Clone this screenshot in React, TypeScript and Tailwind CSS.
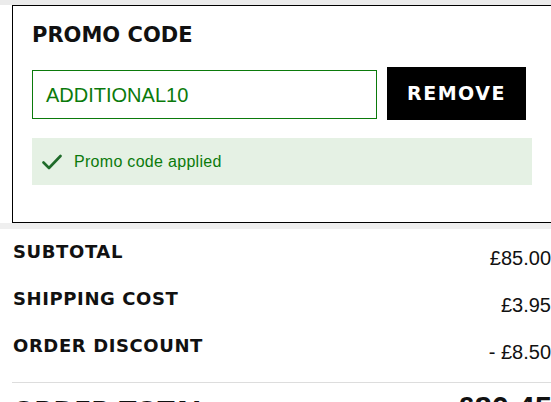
const rows = [
  { label: 'SUBTOTAL', value: '£85.00' },
  { label: 'SHIPPING COST', value: '£3.95' },
  { label: 'ORDER DISCOUNT', value: '- £8.50' },
];

const heading = "font-['DejaVu_Sans',sans-serif] font-bold";

export default function App() {
  return (
    <div className="w-[551px] h-[402px] overflow-hidden bg-white text-[#111]">
      <div className="h-[5px] bg-[#ebebeb]" />
      <div className="w-[540px] ml-[12px]">
        <section className="border border-black px-[19px] pt-[17px] pb-[37px]">
          <h2 className={`${heading} text-[21px] leading-[24px] text-[#111]`}>PROMO CODE</h2>
          <div className="mt-[20px] flex items-center">
            <div className="w-[345px] h-[49px] mt-[2px] border border-[#0b7a0b] flex items-center px-[13px]">
              <span className="font-['Liberation_Sans',Arial,sans-serif] text-[20px] text-[#0b7a0b]">ADDITIONAL10</span>
            </div>
            <button className={`ml-[10px] w-[139px] h-[53px] bg-black text-white ${heading} text-[19px] tracking-[1.5px] flex items-center justify-center`}>
              REMOVE
            </button>
          </div>
          <div className="mt-[18px] h-[47px] bg-[#e5f1e4] flex items-center pl-[10px] gap-[12px]">
            <svg width="20" height="16" viewBox="0 0 20 16" fill="none" stroke="#1f6b2a" strokeWidth="2.6" strokeLinecap="round" strokeLinejoin="round">
              <path d="M1.5 8.5 7 14 18.5 2" />
            </svg>
            <span className="font-['Liberation_Sans',Arial,sans-serif] text-[16px] tracking-[0.3px] text-[#0b7a0b]">Promo code applied</span>
          </div>
        </section>
        <div className="h-[6px] -mx-[12px] bg-[#efefef]" />
        <div className="pt-[11px]">
          {rows.map((r) => (
            <div key={r.label} className="flex justify-between h-[47px]">
              <span className={`${heading} text-[18px] leading-[24px] tracking-[0.6px] pl-px`}>{r.label}</span>
              <span className="mt-[6px] font-['Liberation_Sans',Arial,sans-serif] text-[20px] leading-[24px] pr-[1px]">{r.value}</span>
            </div>
          ))}
        </div>
        <div className="mt-[1px] border-t border-[#dddddd] pt-[9px] flex justify-between items-baseline">
          <span className={`${heading} text-[25px] leading-[34px] pl-px`}>ORDER TOTAL</span>
          <span className="font-['Liberation_Sans',Arial,sans-serif] font-bold text-[31px] leading-[34px]">£80.45</span>
        </div>
      </div>
    </div>
  );
}
